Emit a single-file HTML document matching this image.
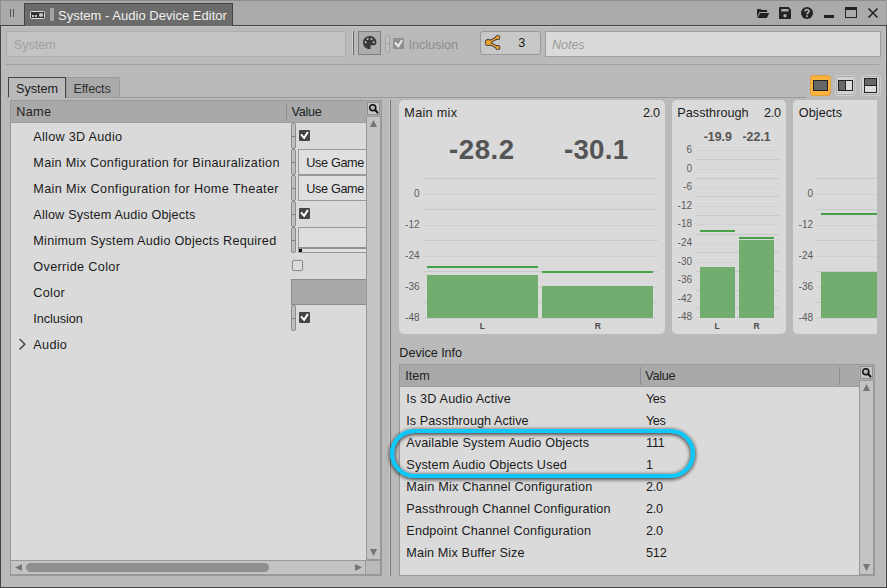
<!DOCTYPE html>
<html><head><meta charset="utf-8"><title>System - Audio Device Editor</title>
<style>
html,body{margin:0;padding:0;}
body{width:887px;height:588px;overflow:hidden;background:#bababa;font-family:'Liberation Sans', sans-serif;position:relative;}
#w{position:absolute;left:0;top:0;width:887px;height:588px;overflow:hidden;}
#w div{position:absolute;box-sizing:border-box;}
#w svg{position:absolute;overflow:visible;}
.t{font-family:'Liberation Sans', sans-serif;}
</style></head><body><div id="w"><svg width="0" height="0" style="left:0;top:0"><defs><radialGradient id="lens" cx="45%" cy="40%" r="60%"><stop offset="0" stop-color="#d6d6d6"/><stop offset="1" stop-color="#6c6c6c"/></radialGradient></defs></svg>
<div style="left:0px;top:0px;width:887px;height:26px;background:#aaaaaa;"></div>
<div style="left:0px;top:0px;width:887px;height:1px;background:#8e8e8e;"></div>
<div style="left:0px;top:0px;width:1px;height:25px;background:#8e8e8e;"></div>
<div style="left:886px;top:0px;width:1px;height:25px;background:#999;"></div>
<div style="left:0px;top:25px;width:887px;height:1px;background:#444444;"></div>
<div style="left:10px;top:9px;width:1px;height:8px;background:#555;"></div>
<div style="left:13px;top:9px;width:1px;height:8px;background:#555;"></div>
<div style="left:24px;top:3px;width:209px;height:23px;background:#6b6b6b;border:1px solid #444444;border-bottom:none;"></div>
<svg style="left:30px;top:11px" width="15" height="8" viewBox="0 0 15 8"><rect x="0.5" y="0.5" width="14" height="7" rx="1" fill="#333" stroke="#ddd"/><rect x="2" y="4" width="2" height="2" fill="#c8c8c8"/><rect x="5" y="4" width="2" height="2" fill="#c8c8c8"/><circle cx="11" cy="4" r="2.1" fill="#c8c8c8"/></svg>
<div style="left:50px;top:8px;width:4px;height:13px;background:#a3a3a3;"></div>
<div class="t" style="top:6.30px;height:20px;line-height:20px;font-size:13px;color:#f0f0f0;letter-spacing:0.02px;white-space:pre;left:58px;">System - Audio Device Editor</div>
<svg style="left:757px;top:9px" width="13" height="9" viewBox="0 0 13 9"><path d="M0 8.8V.8Q0 0 .8 0H3.6L4.6 1H9.4Q10.2 1 10.2 1.8V3H2.4L0 8.8Z" fill="#222"/><path d="M.6 9L3 3.9H12.3L9.8 9Z" fill="#222"/></svg>
<svg style="left:779px;top:7px" width="12" height="12" viewBox="0 0 12 12"><path d="M1 0H9.5L12 2.5V11Q12 12 11 12H1Q0 12 0 11V1Q0 0 1 0Z" fill="#222"/><rect x="2.2" y="2" width="7.4" height="2.5" fill="#aaaaaa"/><circle cx="6" cy="8.8" r="1.7" fill="#aaaaaa"/></svg>
<svg style="left:801px;top:7px" width="12" height="12" viewBox="0 0 12 12"><circle cx="6" cy="6" r="6" fill="#222"/><path d="M4.1 4.6Q4.1 2.7 6 2.7Q7.9 2.7 7.9 4.4Q7.9 5.4 6.9 5.9Q6 6.4 6 7.3" fill="none" stroke="#aaaaaa" stroke-width="1.8"/><rect x="5.1" y="8.3" width="1.8" height="1.8" fill="#aaaaaa"/></svg>
<div style="left:824px;top:15px;width:10px;height:3px;background:#222;"></div>
<div style="left:845px;top:7px;width:12px;height:11px;border:1px solid #222;border-top:3px solid #222;"></div>
<svg style="left:868px;top:8px" width="10" height="10" viewBox="0 0 10 10"><path d="M.5 .5L9.5 9.5M9.5 .5L.5 9.5" stroke="#222" stroke-width="1.6" fill="none"/></svg>
<div style="left:0px;top:26px;width:1px;height:562px;background:#444444;"></div>
<div style="left:886px;top:26px;width:1px;height:562px;background:#444444;"></div>
<div style="left:0px;top:587px;width:887px;height:1px;background:#444444;"></div>
<div style="left:1px;top:26px;width:885px;height:1px;background:#c4c4c4;"></div>
<div style="left:885px;top:26px;width:1px;height:561px;background:#c4c4c4;"></div>
<div style="left:6px;top:31px;width:340px;height:26px;background:#c3c3c3;border:1px solid #adadad;"></div>
<div class="t" style="top:35.00px;height:20px;line-height:20px;font-size:12.67px;color:#a0a0a0;letter-spacing:-0.05px;white-space:pre;left:13.8px;">System</div>
<div style="left:352px;top:31px;width:1px;height:24px;background:#d0d0d0;"></div>
<div style="left:353px;top:31px;width:1px;height:24px;background:#666;"></div>
<div style="left:358px;top:31px;width:23px;height:24px;background:#adadad;border:1px solid #808080;"></div>
<svg style="left:363px;top:36px" width="14" height="13" viewBox="0 0 14 13"><path d="M6.8 0C3 0 0 2.9 0 6.4C0 10 2.8 13 6.4 13C7.6 13 7.9 12.2 7.5 11.4C7 10.3 7.6 9.3 8.8 9.3H11C12.6 9.3 13.4 8 13.4 6.2C13.4 2.7 10.6 0 6.8 0Z" fill="#3a3a3a"/><circle cx="2.6" cy="6.2" r="1" fill="#c4c4c4"/><circle cx="4.6" cy="2.9" r="1" fill="#c4c4c4"/><circle cx="8.5" cy="2.9" r="1" fill="#c4c4c4"/><circle cx="10.7" cy="6.2" r="1" fill="#c4c4c4"/></svg>
<div style="left:385px;top:35px;width:5px;height:18px;background:#c0c0c0;border:1px solid #a6a6a6;border-radius:2.5px;"></div>
<div style="left:385px;top:43px;width:5px;height:1px;background:#a6a6a6;"></div>
<div style="left:393px;top:38px;width:11px;height:11px;background:#909090;border-radius:1px;"></div>
<svg style="left:393px;top:38px" width="11" height="11" viewBox="0 0 11 11"><path d="M1.9 4.5L5.3 8.3L9 2.2" stroke="#e8e8e8" stroke-width="2.1" fill="none"/></svg>
<div class="t" style="top:35.00px;height:20px;line-height:20px;font-size:12.67px;color:#8c8c8c;letter-spacing:-0.05px;white-space:pre;left:408.6px;">Inclusion</div>
<div style="left:480px;top:31px;width:61px;height:24px;background:#c8c8c8;border:1px solid #999;border-radius:3px;"></div>
<svg style="left:484px;top:34px" width="18" height="18" viewBox="0 0 18 18"><path d="M4.3 8.6L13.8 3.4M4.3 8.6L13.8 13.6" stroke="#3a3a3a" stroke-width="3" fill="none"/><circle cx="4.3" cy="8.6" r="3.5" fill="#3a3a3a"/><circle cx="13.8" cy="3.4" r="2.5" fill="#3a3a3a"/><circle cx="13.8" cy="13.6" r="2.5" fill="#3a3a3a"/><path d="M4.3 8.6L13.8 3.4M4.3 8.6L13.8 13.6" stroke="#f0a22e" stroke-width="1.3" fill="none"/><circle cx="4.3" cy="8.6" r="2.7" fill="#f0a22e"/><circle cx="13.8" cy="3.4" r="1.7" fill="#f0a22e"/><circle cx="13.8" cy="13.6" r="1.7" fill="#f0a22e"/></svg>
<div class="t" style="top:33.00px;height:20px;line-height:20px;font-size:12.67px;color:#1a1a1a;letter-spacing:0px;white-space:pre;left:518.3px;">3</div>
<div style="left:545px;top:31px;width:336px;height:26px;background:#dadada;border:1px solid #9e9e9e;"></div>
<div class="t" style="top:35.00px;height:20px;line-height:20px;font-size:12.67px;color:#9a9a9a;letter-spacing:-0.1px;white-space:pre;font-style:italic;left:552px;">Notes</div>
<div style="left:6px;top:64px;width:873px;height:1px;background:#a0a0a0;"></div>
<div style="left:810px;top:75px;width:21px;height:21px;background:#fcb23f;border:1px solid #e0a040;border-radius:3px;"></div>
<div style="left:813px;top:80px;width:15px;height:11px;background:#666;border:1px solid #222;"></div>
<div style="left:835px;top:75px;width:21px;height:21px;background:#d3d3d3;border:1px solid #cecece;border-radius:3px;box-shadow:inset 0 0 0 1px #acacac;"></div>
<div style="left:838px;top:80px;width:15px;height:11px;background:#ddd;border:1px solid #222;"></div>
<div style="left:839px;top:81px;width:6px;height:9px;background:#666;"></div>
<div style="left:845px;top:81px;width:1px;height:9px;background:#222;"></div>
<div style="left:860px;top:75px;width:21px;height:21px;background:#d3d3d3;border:1px solid #cecece;border-radius:3px;box-shadow:inset 0 0 0 1px #acacac;"></div>
<div style="left:864px;top:78px;width:13px;height:15px;background:#ddd;border:1px solid #222;"></div>
<div style="left:865px;top:79px;width:11px;height:6px;background:#666;"></div>
<div style="left:865px;top:85px;width:11px;height:1px;background:#222;"></div>
<div style="left:119px;top:97px;width:687px;height:1px;background:#999999;"></div>
<div style="left:66px;top:77px;width:54px;height:21px;background:#a9a9a9;border:1px solid #9c9c9c;"></div>
<div class="t" style="top:79.30px;height:20px;line-height:20px;font-size:12.67px;color:#333;letter-spacing:-0.2px;white-space:pre;left:73.5px;">Effects</div>
<div style="left:8px;top:77px;width:58px;height:21px;background:#bababa;border:1px solid #444444;border-bottom:none;"></div>
<div style="left:7px;top:97px;width:2px;height:1px;background:#999999;"></div>
<div class="t" style="top:79.30px;height:20px;line-height:20px;font-size:12.67px;color:#1a1a1a;letter-spacing:-0.05px;white-space:pre;left:16px;">System</div>
<div style="left:10px;top:100px;width:372px;height:476px;background:#dadada;border:1px solid #999999;"></div>
<div style="left:11px;top:101px;width:355px;height:21px;background:#a9a9a9;"></div>
<div style="left:11px;top:122px;width:355px;height:1px;background:#9d9d9d;"></div>
<div style="left:286px;top:103px;width:1px;height:18px;background:#8c8c8c;"></div>
<div class="t" style="top:101.50px;height:20px;line-height:20px;font-size:12.67px;color:#222;letter-spacing:0.3px;white-space:pre;left:16.3px;">Name</div>
<div class="t" style="top:101.50px;height:20px;line-height:20px;font-size:12.67px;color:#222;letter-spacing:-0.3px;white-space:pre;left:291.5px;">Value</div>
<div style="left:366px;top:101px;width:15px;height:16px;background:#afafaf;"></div>
<div style="left:367px;top:102px;width:13px;height:13px;background:#c6c6c6;border:1px solid #8e8e8e;"></div>
<svg style="left:368px;top:103px" width="11" height="11" viewBox="0 0 11 11"><circle cx="4.8" cy="4.8" r="3.1" fill="url(#lens)" stroke="#111" stroke-width="1.4"/><path d="M7.3 7.3L9.5 9.5" stroke="#111" stroke-width="2" stroke-linecap="round"/></svg>
<div style="left:366px;top:116px;width:15px;height:444px;background:#c3c3c3;border:1px solid #999999;"></div>
<svg style="left:370px;top:120px" width="7" height="7" viewBox="0 0 7 7"><polygon points="0,7 3.5,0 7,7" fill="#767676"/></svg>
<svg style="left:370px;top:549px" width="7" height="7" viewBox="0 0 7 7"><polygon points="0,0 7,0 3.5,7" fill="#767676"/></svg>
<div style="left:11px;top:560px;width:355px;height:15px;background:#c3c3c3;border-top:1px solid #999999;border-right:1px solid #999999;border-bottom:1px solid #999999;"></div>
<svg style="left:15px;top:564px" width="7" height="7" viewBox="0 0 7 7"><polygon points="7,0 7,7 0,3.5" fill="#767676"/></svg>
<svg style="left:355px;top:564px" width="7" height="7" viewBox="0 0 7 7"><polygon points="0,0 7,3.5 0,7" fill="#767676"/></svg>
<div style="left:26px;top:563px;width:243px;height:9px;background:#8f8f8f;border-radius:4.5px;"></div>
<div style="left:366px;top:560px;width:15px;height:15px;background:#bababa;border-top:1px solid #999999;border-right:1px solid #999999;border-bottom:1px solid #999999;"></div>
<div class="t" style="top:127.00px;height:20px;line-height:20px;font-size:12.67px;color:#1a1a1a;letter-spacing:0.28px;white-space:pre;left:33.3px;">Allow 3D Audio</div>
<div class="t" style="top:153.00px;height:20px;line-height:20px;font-size:12.67px;color:#1a1a1a;letter-spacing:0.29px;white-space:pre;left:33.3px;">Main Mix Configuration for Binauralization</div>
<div class="t" style="top:179.00px;height:20px;line-height:20px;font-size:12.67px;color:#1a1a1a;letter-spacing:0.35px;white-space:pre;left:33.3px;">Main Mix Configuration for Home Theater</div>
<div class="t" style="top:205.00px;height:20px;line-height:20px;font-size:12.67px;color:#1a1a1a;letter-spacing:0.18px;white-space:pre;left:33.3px;">Allow System Audio Objects</div>
<div class="t" style="top:231.00px;height:20px;line-height:20px;font-size:12.67px;color:#1a1a1a;letter-spacing:0.26px;white-space:pre;left:33.3px;">Minimum System Audio Objects Required</div>
<div class="t" style="top:257.00px;height:20px;line-height:20px;font-size:12.67px;color:#1a1a1a;letter-spacing:0.33px;white-space:pre;left:33.3px;">Override Color</div>
<div class="t" style="top:283.00px;height:20px;line-height:20px;font-size:12.67px;color:#1a1a1a;letter-spacing:0.3px;white-space:pre;left:33.3px;">Color</div>
<div class="t" style="top:309.00px;height:20px;line-height:20px;font-size:12.67px;color:#1a1a1a;letter-spacing:-0.05px;white-space:pre;left:33.3px;">Inclusion</div>
<div class="t" style="top:335.00px;height:20px;line-height:20px;font-size:12.67px;color:#1a1a1a;letter-spacing:0.3px;white-space:pre;left:33.3px;">Audio</div>
<svg style="left:19px;top:338px" width="7" height="12" viewBox="0 0 7 12"><path d="M.6 1L5.8 6.2L.6 11.4" stroke="#484848" stroke-width="1.5" fill="none"/></svg>
<div style="left:291px;top:123px;width:5px;height:26px;background:#c0c0c0;border:1px solid #8a8a8a;border-radius:2px;"></div>
<div style="left:291px;top:136px;width:5px;height:1px;background:#808080;"></div>
<div style="left:291px;top:149px;width:5px;height:26px;background:#c0c0c0;border:1px solid #8a8a8a;border-radius:2px;"></div>
<div style="left:291px;top:162px;width:5px;height:1px;background:#808080;"></div>
<div style="left:291px;top:175px;width:5px;height:26px;background:#c0c0c0;border:1px solid #8a8a8a;border-radius:2px;"></div>
<div style="left:291px;top:188px;width:5px;height:1px;background:#808080;"></div>
<div style="left:291px;top:201px;width:5px;height:26px;background:#c0c0c0;border:1px solid #8a8a8a;border-radius:2px;"></div>
<div style="left:291px;top:214px;width:5px;height:1px;background:#808080;"></div>
<div style="left:291px;top:227px;width:5px;height:26px;background:#c0c0c0;border:1px solid #8a8a8a;border-radius:2px;"></div>
<div style="left:291px;top:240px;width:5px;height:1px;background:#808080;"></div>
<div style="left:291px;top:305px;width:5px;height:26px;background:#c0c0c0;border:1px solid #8a8a8a;border-radius:2px;"></div>
<div style="left:291px;top:318px;width:5px;height:1px;background:#808080;"></div>
<div style="left:299px;top:130px;width:11px;height:11px;background:#444;border-radius:1px;"></div>
<svg style="left:299px;top:130px" width="11" height="11" viewBox="0 0 11 11"><path d="M2 4.4L5.1 7.9L8.9 2" stroke="#fff" stroke-width="2" fill="none"/></svg>
<div style="left:299px;top:208px;width:11px;height:11px;background:#444;border-radius:1px;"></div>
<svg style="left:299px;top:208px" width="11" height="11" viewBox="0 0 11 11"><path d="M2 4.4L5.1 7.9L8.9 2" stroke="#fff" stroke-width="2" fill="none"/></svg>
<div style="left:299px;top:312px;width:11px;height:11px;background:#444;border-radius:1px;"></div>
<svg style="left:299px;top:312px" width="11" height="11" viewBox="0 0 11 11"><path d="M2 4.4L5.1 7.9L8.9 2" stroke="#fff" stroke-width="2" fill="none"/></svg>
<div style="left:292px;top:260px;width:11px;height:11px;background:#dcdcdc;border:1px solid #8c8c8c;border-radius:2px;box-shadow:0 0 0 1px #d2d2d2;"></div>
<div style="left:298px;top:149px;width:68px;height:26px;background:#dfdfdf;border:1px solid #999999;border-right:none;"></div>
<div class="t" style="top:153.00px;height:20px;line-height:20px;font-size:12.67px;color:#1a1a1a;letter-spacing:-0.35px;white-space:pre;left:306.3px;width:59.7px;overflow:hidden;">Use Game</div>
<div style="left:298px;top:175px;width:68px;height:26px;background:#dfdfdf;border:1px solid #999999;border-right:none;"></div>
<div class="t" style="top:179.00px;height:20px;line-height:20px;font-size:12.67px;color:#1a1a1a;letter-spacing:-0.35px;white-space:pre;left:306.3px;width:59.7px;overflow:hidden;">Use Game</div>
<div style="left:298px;top:227px;width:68px;height:22px;background:#dedede;border:1px solid #999999;border-right:none;border-bottom:2px solid #929292;"></div>
<div style="left:298px;top:249px;width:68px;height:4px;background:#e0e0e0;border:1px solid #999999;border-right:none;border-top:none;"></div>
<div style="left:299px;top:249px;width:3px;height:3px;background:#111;"></div>
<div style="left:291px;top:279px;width:75px;height:26px;background:#a8a8a8;border:1px solid #8c8c8c;border-right:none;"></div>
<div style="left:389px;top:100px;width:1px;height:476px;background:#cdcdcd;"></div>
<div style="left:390px;top:100px;width:1px;height:476px;background:#777;"></div>
<div style="left:399px;top:100px;width:266px;height:234px;background:#dadada;border-radius:5px;"></div>
<div class="t" style="top:102.50px;height:20px;line-height:20px;font-size:12.67px;color:#1a1a1a;letter-spacing:0.3px;white-space:pre;left:404.3px;">Main mix</div>
<div class="t" style="top:102.50px;height:20px;line-height:20px;font-size:12.67px;color:#1a1a1a;letter-spacing:-0.3px;white-space:pre;right:227.3px;text-align:right;">2.0</div>
<div class="t" style="top:140.00px;height:20px;line-height:20px;font-size:27.7px;color:#555;letter-spacing:0.5px;white-space:pre;font-weight:700;left:381.9px;width:200px;text-align:center;">-28.2</div>
<div class="t" style="top:140.00px;height:20px;line-height:20px;font-size:27.7px;color:#555;letter-spacing:0.3px;white-space:pre;font-weight:700;left:496.20000000000005px;width:200px;text-align:center;">-30.1</div>
<div style="left:423px;top:178px;width:235px;height:1px;background:#c9c9c9;"></div>
<div style="left:423px;top:194px;width:235px;height:1px;background:#d0d0d0;"></div>
<div style="left:423px;top:209px;width:235px;height:1px;background:#c9c9c9;"></div>
<div style="left:423px;top:225px;width:235px;height:1px;background:#d0d0d0;"></div>
<div style="left:423px;top:240px;width:235px;height:1px;background:#c9c9c9;"></div>
<div style="left:423px;top:256px;width:235px;height:1px;background:#d0d0d0;"></div>
<div style="left:423px;top:271px;width:235px;height:1px;background:#c9c9c9;"></div>
<div style="left:423px;top:287px;width:235px;height:1px;background:#d0d0d0;"></div>
<div style="left:423px;top:302px;width:235px;height:1px;background:#c9c9c9;"></div>
<div style="left:423px;top:318px;width:235px;height:1px;background:#d0d0d0;"></div>
<div class="t" style="top:184.00px;height:20px;line-height:20px;font-size:10px;color:#5a5a5a;letter-spacing:0px;white-space:pre;right:467.5px;text-align:right;">0</div>
<div class="t" style="top:215.00px;height:20px;line-height:20px;font-size:10px;color:#5a5a5a;letter-spacing:0px;white-space:pre;right:467.5px;text-align:right;">-12</div>
<div class="t" style="top:246.00px;height:20px;line-height:20px;font-size:10px;color:#5a5a5a;letter-spacing:0px;white-space:pre;right:467.5px;text-align:right;">-24</div>
<div class="t" style="top:277.00px;height:20px;line-height:20px;font-size:10px;color:#5a5a5a;letter-spacing:0px;white-space:pre;right:467.5px;text-align:right;">-36</div>
<div class="t" style="top:308.00px;height:20px;line-height:20px;font-size:10px;color:#5a5a5a;letter-spacing:0px;white-space:pre;right:467.5px;text-align:right;">-48</div>
<div style="left:427px;top:266px;width:111px;height:2px;background:#47a147;"></div>
<div style="left:427px;top:275px;width:111px;height:43px;background:#70ad6e;"></div>
<div style="left:542px;top:271px;width:111px;height:2px;background:#47a147;"></div>
<div style="left:542px;top:286px;width:111px;height:32px;background:#70ad6e;"></div>
<div class="t" style="top:316.30px;height:20px;line-height:20px;font-size:8.5px;color:#4a4a4a;letter-spacing:0px;white-space:pre;font-weight:700;left:382.4px;width:200px;text-align:center;">L</div>
<div class="t" style="top:316.30px;height:20px;line-height:20px;font-size:8.5px;color:#4a4a4a;letter-spacing:0px;white-space:pre;font-weight:700;left:497.9px;width:200px;text-align:center;">R</div>
<div style="left:672px;top:100px;width:114px;height:234px;background:#dadada;border-radius:5px;"></div>
<div class="t" style="top:102.50px;height:20px;line-height:20px;font-size:12.67px;color:#1a1a1a;letter-spacing:0.03px;white-space:pre;left:677.3px;">Passthrough</div>
<div class="t" style="top:102.50px;height:20px;line-height:20px;font-size:12.67px;color:#1a1a1a;letter-spacing:-0.3px;white-space:pre;right:106.3px;text-align:right;">2.0</div>
<div class="t" style="top:126.50px;height:20px;line-height:20px;font-size:12.4px;color:#555;letter-spacing:0px;white-space:pre;font-weight:700;left:617.8px;width:200px;text-align:center;">-19.9</div>
<div class="t" style="top:126.50px;height:20px;line-height:20px;font-size:12.4px;color:#555;letter-spacing:0px;white-space:pre;font-weight:700;left:656.6px;width:200px;text-align:center;">-22.1</div>
<div style="left:696px;top:150px;width:83px;height:1px;background:#d1d1d1;"></div>
<div style="left:696px;top:159px;width:83px;height:1px;background:#c9c9c9;"></div>
<div style="left:696px;top:169px;width:83px;height:1px;background:#d1d1d1;"></div>
<div style="left:696px;top:178px;width:83px;height:1px;background:#c9c9c9;"></div>
<div style="left:696px;top:187px;width:83px;height:1px;background:#d1d1d1;"></div>
<div style="left:696px;top:196px;width:83px;height:1px;background:#c9c9c9;"></div>
<div style="left:696px;top:206px;width:83px;height:1px;background:#d1d1d1;"></div>
<div style="left:696px;top:215px;width:83px;height:1px;background:#c9c9c9;"></div>
<div style="left:696px;top:224px;width:83px;height:1px;background:#d1d1d1;"></div>
<div style="left:696px;top:234px;width:83px;height:1px;background:#c9c9c9;"></div>
<div style="left:696px;top:243px;width:83px;height:1px;background:#d1d1d1;"></div>
<div style="left:696px;top:252px;width:83px;height:1px;background:#c9c9c9;"></div>
<div style="left:696px;top:262px;width:83px;height:1px;background:#d1d1d1;"></div>
<div style="left:696px;top:271px;width:83px;height:1px;background:#c9c9c9;"></div>
<div style="left:696px;top:280px;width:83px;height:1px;background:#d1d1d1;"></div>
<div style="left:696px;top:290px;width:83px;height:1px;background:#c9c9c9;"></div>
<div style="left:696px;top:299px;width:83px;height:1px;background:#d1d1d1;"></div>
<div style="left:696px;top:308px;width:83px;height:1px;background:#c9c9c9;"></div>
<div style="left:696px;top:317px;width:83px;height:1px;background:#d1d1d1;"></div>
<div class="t" style="top:140.00px;height:20px;line-height:20px;font-size:10px;color:#5a5a5a;letter-spacing:0px;white-space:pre;right:195px;text-align:right;">6</div>
<div class="t" style="top:159.00px;height:20px;line-height:20px;font-size:10px;color:#5a5a5a;letter-spacing:0px;white-space:pre;right:195px;text-align:right;">0</div>
<div class="t" style="top:177.00px;height:20px;line-height:20px;font-size:10px;color:#5a5a5a;letter-spacing:0px;white-space:pre;right:195px;text-align:right;">-6</div>
<div class="t" style="top:196.00px;height:20px;line-height:20px;font-size:10px;color:#5a5a5a;letter-spacing:0px;white-space:pre;right:195px;text-align:right;">-12</div>
<div class="t" style="top:214.00px;height:20px;line-height:20px;font-size:10px;color:#5a5a5a;letter-spacing:0px;white-space:pre;right:195px;text-align:right;">-18</div>
<div class="t" style="top:233.00px;height:20px;line-height:20px;font-size:10px;color:#5a5a5a;letter-spacing:0px;white-space:pre;right:195px;text-align:right;">-24</div>
<div class="t" style="top:252.00px;height:20px;line-height:20px;font-size:10px;color:#5a5a5a;letter-spacing:0px;white-space:pre;right:195px;text-align:right;">-30</div>
<div class="t" style="top:270.00px;height:20px;line-height:20px;font-size:10px;color:#5a5a5a;letter-spacing:0px;white-space:pre;right:195px;text-align:right;">-36</div>
<div class="t" style="top:289.00px;height:20px;line-height:20px;font-size:10px;color:#5a5a5a;letter-spacing:0px;white-space:pre;right:195px;text-align:right;">-42</div>
<div class="t" style="top:307.00px;height:20px;line-height:20px;font-size:10px;color:#5a5a5a;letter-spacing:0px;white-space:pre;right:195px;text-align:right;">-48</div>
<div style="left:700px;top:230px;width:35px;height:2px;background:#47a147;"></div>
<div style="left:700px;top:267px;width:35px;height:51px;background:#70ad6e;"></div>
<div style="left:739px;top:237px;width:35px;height:2px;background:#47a147;"></div>
<div style="left:739px;top:240px;width:35px;height:78px;background:#70ad6e;"></div>
<div class="t" style="top:316.30px;height:20px;line-height:20px;font-size:8.5px;color:#4a4a4a;letter-spacing:0px;white-space:pre;font-weight:700;left:617px;width:200px;text-align:center;">L</div>
<div class="t" style="top:316.30px;height:20px;line-height:20px;font-size:8.5px;color:#4a4a4a;letter-spacing:0px;white-space:pre;font-weight:700;left:656.5px;width:200px;text-align:center;">R</div>
<div style="left:793px;top:100px;width:84px;height:234px;overflow:hidden;"><div style="left:0;top:0;width:120px;height:234px;background:#dadada;border-radius:5px;"></div></div>
<div class="t" style="top:102.50px;height:20px;line-height:20px;font-size:12.67px;color:#1a1a1a;letter-spacing:0.05px;white-space:pre;left:798.8px;">Objects</div>
<div style="left:816px;top:178px;width:61px;height:1px;background:#c9c9c9;"></div>
<div style="left:816px;top:194px;width:61px;height:1px;background:#d0d0d0;"></div>
<div style="left:816px;top:209px;width:61px;height:1px;background:#c9c9c9;"></div>
<div style="left:816px;top:225px;width:61px;height:1px;background:#d0d0d0;"></div>
<div style="left:816px;top:240px;width:61px;height:1px;background:#c9c9c9;"></div>
<div style="left:816px;top:256px;width:61px;height:1px;background:#d0d0d0;"></div>
<div style="left:816px;top:271px;width:61px;height:1px;background:#c9c9c9;"></div>
<div style="left:816px;top:287px;width:61px;height:1px;background:#d0d0d0;"></div>
<div style="left:816px;top:302px;width:61px;height:1px;background:#c9c9c9;"></div>
<div style="left:816px;top:318px;width:61px;height:1px;background:#d0d0d0;"></div>
<div class="t" style="top:184.00px;height:20px;line-height:20px;font-size:10px;color:#5a5a5a;letter-spacing:0px;white-space:pre;right:74px;text-align:right;">0</div>
<div class="t" style="top:215.00px;height:20px;line-height:20px;font-size:10px;color:#5a5a5a;letter-spacing:0px;white-space:pre;right:74px;text-align:right;">-12</div>
<div class="t" style="top:246.00px;height:20px;line-height:20px;font-size:10px;color:#5a5a5a;letter-spacing:0px;white-space:pre;right:74px;text-align:right;">-24</div>
<div class="t" style="top:277.00px;height:20px;line-height:20px;font-size:10px;color:#5a5a5a;letter-spacing:0px;white-space:pre;right:74px;text-align:right;">-36</div>
<div class="t" style="top:308.00px;height:20px;line-height:20px;font-size:10px;color:#5a5a5a;letter-spacing:0px;white-space:pre;right:74px;text-align:right;">-48</div>
<div style="left:821px;top:213px;width:56px;height:2px;background:#47a147;"></div>
<div style="left:821px;top:272px;width:56px;height:46px;background:#70ad6e;"></div>
<div class="t" style="top:342.80px;height:20px;line-height:20px;font-size:12.67px;color:#1a1a1a;letter-spacing:-0.05px;white-space:pre;left:399.3px;">Device Info</div>
<div style="left:399px;top:364px;width:476px;height:212px;background:#dadada;border:1px solid #999999;"></div>
<div style="left:400px;top:365px;width:459px;height:21px;background:#a9a9a9;"></div>
<div style="left:400px;top:386px;width:459px;height:1px;background:#9d9d9d;"></div>
<div style="left:640px;top:367px;width:1px;height:18px;background:#8c8c8c;"></div>
<div style="left:839px;top:367px;width:1px;height:18px;background:#8c8c8c;"></div>
<div class="t" style="top:365.50px;height:20px;line-height:20px;font-size:12.67px;color:#222;letter-spacing:0px;white-space:pre;left:405.3px;">Item</div>
<div class="t" style="top:365.50px;height:20px;line-height:20px;font-size:12.67px;color:#222;letter-spacing:-0.3px;white-space:pre;left:645.3px;">Value</div>
<div style="left:859px;top:365px;width:15px;height:16px;background:#afafaf;"></div>
<div style="left:860px;top:366px;width:13px;height:13px;background:#c6c6c6;border:1px solid #8e8e8e;"></div>
<svg style="left:861px;top:367px" width="11" height="11" viewBox="0 0 11 11"><circle cx="4.8" cy="4.8" r="3.1" fill="url(#lens)" stroke="#111" stroke-width="1.4"/><path d="M7.3 7.3L9.5 9.5" stroke="#111" stroke-width="2" stroke-linecap="round"/></svg>
<div style="left:859px;top:380px;width:15px;height:195px;background:#c3c3c3;border:1px solid #999999;"></div>
<svg style="left:863px;top:384px" width="7" height="7" viewBox="0 0 7 7"><polygon points="0,7 3.5,0 7,7" fill="#767676"/></svg>
<svg style="left:863px;top:564px" width="7" height="7" viewBox="0 0 7 7"><polygon points="0,0 7,0 3.5,7" fill="#767676"/></svg>
<div class="t" style="top:389.30px;height:20px;line-height:20px;font-size:12.67px;color:#1a1a1a;letter-spacing:0.15px;white-space:pre;left:406.3px;">Is 3D Audio Active</div>
<div class="t" style="top:389.30px;height:20px;line-height:20px;font-size:12.67px;color:#1a1a1a;letter-spacing:-0.45px;white-space:pre;left:646px;">Yes</div>
<div class="t" style="top:411.30px;height:20px;line-height:20px;font-size:12.67px;color:#1a1a1a;letter-spacing:0.03px;white-space:pre;left:406.3px;">Is Passthrough Active</div>
<div class="t" style="top:411.30px;height:20px;line-height:20px;font-size:12.67px;color:#1a1a1a;letter-spacing:-0.45px;white-space:pre;left:646px;">Yes</div>
<div class="t" style="top:433.30px;height:20px;line-height:20px;font-size:12.67px;color:#1a1a1a;letter-spacing:0.145px;white-space:pre;left:406.3px;">Available System Audio Objects</div>
<div class="t" style="top:433.30px;height:20px;line-height:20px;font-size:12.67px;color:#1a1a1a;letter-spacing:-0.2px;white-space:pre;left:646px;">111</div>
<div class="t" style="top:455.30px;height:20px;line-height:20px;font-size:12.67px;color:#1a1a1a;letter-spacing:0.155px;white-space:pre;left:406.3px;">System Audio Objects Used</div>
<div class="t" style="top:455.30px;height:20px;line-height:20px;font-size:12.67px;color:#1a1a1a;letter-spacing:-0.2px;white-space:pre;left:646px;">1</div>
<div class="t" style="top:477.30px;height:20px;line-height:20px;font-size:12.67px;color:#1a1a1a;letter-spacing:0.2px;white-space:pre;left:406.3px;">Main Mix Channel Configuration</div>
<div class="t" style="top:477.30px;height:20px;line-height:20px;font-size:12.67px;color:#1a1a1a;letter-spacing:-0.3px;white-space:pre;left:646px;">2.0</div>
<div class="t" style="top:499.30px;height:20px;line-height:20px;font-size:12.67px;color:#1a1a1a;letter-spacing:0.115px;white-space:pre;left:406.3px;">Passthrough Channel Configuration</div>
<div class="t" style="top:499.30px;height:20px;line-height:20px;font-size:12.67px;color:#1a1a1a;letter-spacing:-0.3px;white-space:pre;left:646px;">2.0</div>
<div class="t" style="top:521.30px;height:20px;line-height:20px;font-size:12.67px;color:#1a1a1a;letter-spacing:0.18px;white-space:pre;left:406.3px;">Endpoint Channel Configuration</div>
<div class="t" style="top:521.30px;height:20px;line-height:20px;font-size:12.67px;color:#1a1a1a;letter-spacing:-0.3px;white-space:pre;left:646px;">2.0</div>
<div class="t" style="top:543.30px;height:20px;line-height:20px;font-size:12.67px;color:#1a1a1a;letter-spacing:0.125px;white-space:pre;left:406.3px;">Main Mix Buffer Size</div>
<div class="t" style="top:543.30px;height:20px;line-height:20px;font-size:12.67px;color:#1a1a1a;letter-spacing:-0.2px;white-space:pre;left:646px;">512</div>
<svg style="left:380px;top:420px" width="330" height="70" viewBox="380 420 330 70"><defs><filter id="ds" x="-10%" y="-40%" width="120%" height="190%"><feGaussianBlur in="SourceAlpha" stdDeviation="2.3"/><feOffset dx="0" dy="1.3"/><feComponentTransfer><feFuncA type="linear" slope="0.95"/></feComponentTransfer><feMerge><feMergeNode/><feMergeNode in="SourceGraphic"/></feMerge></filter></defs><rect x="392" y="431" width="301" height="45" rx="22.5" ry="22.5" fill="none" stroke="#0cc8fa" stroke-width="4" filter="url(#ds)"/></svg>
</div></body></html>
